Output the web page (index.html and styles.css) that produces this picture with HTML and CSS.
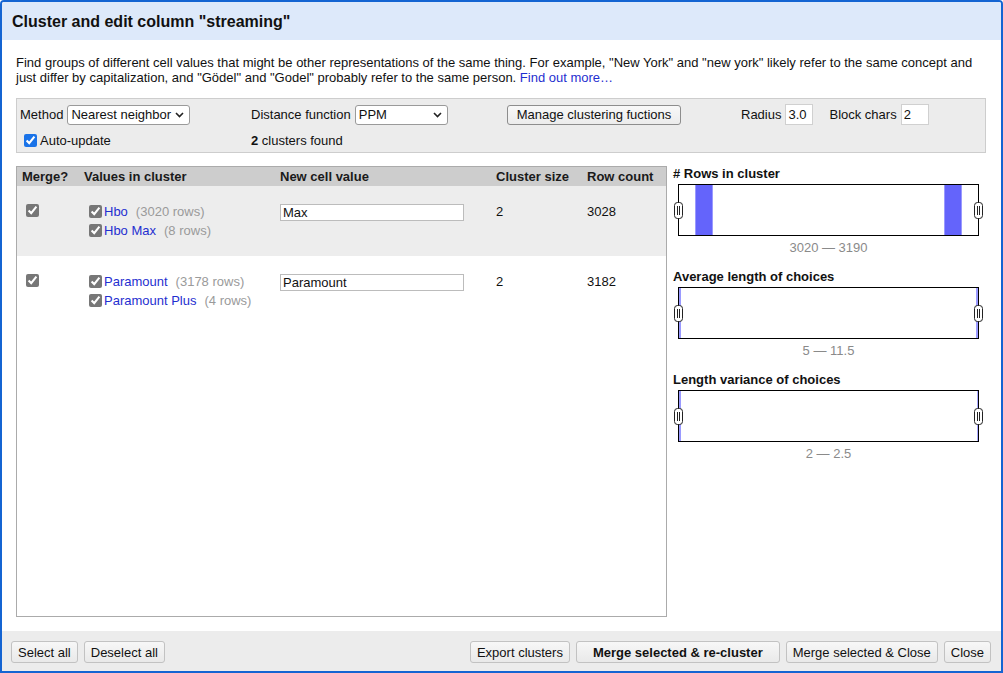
FILE: index.html
```html
<!DOCTYPE html>
<html>
<head>
<meta charset="utf-8">
<link rel="stylesheet" href="styles.css">
</head>
<body>
<div class="dialog">
  <div class="dlg-header"><h1>Cluster and edit column "streaming"</h1></div>
  <div class="dlg-body">
    <p class="intro">Find groups of different cell values that might be other representations of the same thing. For example, "New York" and "new york" likely refer to the same concept and just differ by capitalization, and "Gödel" and "Godel" probably refer to the same person. <a href="#" class="link">Find out more…</a></p>

    <div class="controls">
      <div class="ctl">
        <span>Method</span>
        <span class="sel-wrap sel-method">
          <select class="sel"><option>Nearest neighbor</option></select>
          <svg class="chev" width="9" height="6" viewBox="0 0 9 6"><path d="M1 1 L4.5 4.5 L8 1" fill="none" stroke="#222" stroke-width="1.6"/></svg>
        </span>
      </div>
      <div class="ctl">
        <span>Distance function</span>
        <span class="sel-wrap sel-dist">
          <select class="sel"><option>PPM</option></select>
          <svg class="chev" width="9" height="6" viewBox="0 0 9 6"><path d="M1 1 L4.5 4.5 L8 1" fill="none" stroke="#222" stroke-width="1.6"/></svg>
        </span>
      </div>
      <div class="ctl">
        <button class="btn btn-manage">Manage clustering fuctions</button>
      </div>
      <div class="ctl ctl-params">
        <span>Radius</span><input class="param" type="text" value="3.0">
        <span class="gap-label">Block chars</span><input class="param" type="text" value="2">
      </div>
      <div class="ctl">
        <label class="auto"><input type="checkbox" class="cb-blue" checked>Auto-update</label>
      </div>
      <div class="ctl"><span><b>2</b> clusters found</span></div>
    </div>

    <div class="main">
      <div class="table-wrap">
        <table class="clusters">
          <colgroup>
            <col class="c1"><col class="c2"><col class="c3"><col class="c4"><col>
          </colgroup>
          <thead>
            <tr><th>Merge?</th><th>Values in cluster</th><th>New cell value</th><th>Cluster size</th><th>Row count</th></tr>
          </thead>
          <tbody>
            <tr class="odd">
              <td><input type="checkbox" class="cb-grey cb-merge" checked></td>
              <td>
                <div class="val"><input type="checkbox" class="cb-grey" checked><a href="#" class="link">Hbo</a><span class="count">(3020 rows)</span></div>
                <div class="val"><input type="checkbox" class="cb-grey" checked><a href="#" class="link">Hbo Max</a><span class="count">(8 rows)</span></div>
              </td>
              <td><input type="text" class="newval" value="Max"></td>
              <td>2</td>
              <td>3028</td>
            </tr>
            <tr>
              <td><input type="checkbox" class="cb-grey cb-merge" checked></td>
              <td>
                <div class="val"><input type="checkbox" class="cb-grey" checked><a href="#" class="link">Paramount</a><span class="count">(3178 rows)</span></div>
                <div class="val"><input type="checkbox" class="cb-grey" checked><a href="#" class="link">Paramount Plus</a><span class="count">(4 rows)</span></div>
              </td>
              <td><input type="text" class="newval" value="Paramount"></td>
              <td>2</td>
              <td>3182</td>
            </tr>
          </tbody>
        </table>
      </div>

      <div class="facets">
        <div class="facet">
          <div class="facet-title"># Rows in cluster</div>
          <div class="hist">
            <div class="bar" style="left:16px;width:18px"></div>
            <div class="bar" style="left:265px;width:18px"></div>
            <svg class="handle handle-l" width="9" height="17" viewBox="0 0 9 17"><rect x="0.5" y="0.5" width="8" height="16" rx="3" fill="#fff" stroke="#222"/><line x1="3.5" y1="4" x2="3.5" y2="13" stroke="#222"/><line x1="5.5" y1="4" x2="5.5" y2="13" stroke="#222"/></svg>
            <svg class="handle handle-r" width="9" height="17" viewBox="0 0 9 17"><rect x="0.5" y="0.5" width="8" height="16" rx="3" fill="#fff" stroke="#222"/><line x1="3.5" y1="4" x2="3.5" y2="13" stroke="#222"/><line x1="5.5" y1="4" x2="5.5" y2="13" stroke="#222"/></svg>
          </div>
          <div class="range">3020 — 3190</div>
        </div>
        <div class="facet">
          <div class="facet-title">Average length of choices</div>
          <div class="hist">
            <div class="bar" style="left:0;width:2px"></div>
            <div class="bar" style="left:297px;width:2px"></div>
            <svg class="handle handle-l" width="9" height="17" viewBox="0 0 9 17"><rect x="0.5" y="0.5" width="8" height="16" rx="3" fill="#fff" stroke="#222"/><line x1="3.5" y1="4" x2="3.5" y2="13" stroke="#222"/><line x1="5.5" y1="4" x2="5.5" y2="13" stroke="#222"/></svg>
            <svg class="handle handle-r" width="9" height="17" viewBox="0 0 9 17"><rect x="0.5" y="0.5" width="8" height="16" rx="3" fill="#fff" stroke="#222"/><line x1="3.5" y1="4" x2="3.5" y2="13" stroke="#222"/><line x1="5.5" y1="4" x2="5.5" y2="13" stroke="#222"/></svg>
          </div>
          <div class="range">5 — 11.5</div>
        </div>
        <div class="facet">
          <div class="facet-title">Length variance of choices</div>
          <div class="hist">
            <div class="bar" style="left:0;width:2px"></div>
            <div class="bar bar-light" style="left:298px;width:1px"></div>
            <svg class="handle handle-l" width="9" height="17" viewBox="0 0 9 17"><rect x="0.5" y="0.5" width="8" height="16" rx="3" fill="#fff" stroke="#222"/><line x1="3.5" y1="4" x2="3.5" y2="13" stroke="#222"/><line x1="5.5" y1="4" x2="5.5" y2="13" stroke="#222"/></svg>
            <svg class="handle handle-r" width="9" height="17" viewBox="0 0 9 17"><rect x="0.5" y="0.5" width="8" height="16" rx="3" fill="#fff" stroke="#222"/><line x1="3.5" y1="4" x2="3.5" y2="13" stroke="#222"/><line x1="5.5" y1="4" x2="5.5" y2="13" stroke="#222"/></svg>
          </div>
          <div class="range">2 — 2.5</div>
        </div>
      </div>
    </div>
  </div>
  <div class="dlg-footer">
    <div class="left-btns">
      <button class="btn">Select all</button>
      <button class="btn">Deselect all</button>
    </div>
    <div class="right-btns">
      <button class="btn">Export clusters</button>
      <button class="btn btn-primary">Merge selected &amp; re-cluster</button>
      <button class="btn">Merge selected &amp; Close</button>
      <button class="btn">Close</button>
    </div>
  </div>
</div>
</body>
</html>
```

FILE: styles.css
```css
html, body {
  margin: 0;
  padding: 0;
  background: #fff;
}
body {
  font-family: "Liberation Sans", Arial, sans-serif;
  font-size: 13px;
  color: #111;
}
.dialog {
  box-sizing: border-box;
  width: 1003px;
  height: 673px;
  border: 2px solid #1464d2;
  border-radius: 4px 4px 0 0;
  display: flex;
  flex-direction: column;
  overflow: hidden;
}
.dlg-header {
  height: 38px;
  background: #dde9fa;
  display: flex;
  align-items: center;
  padding-left: 10px;
  flex: none;
}
.dlg-header h1 {
  margin: 0;
  font-size: 16px;
  font-weight: bold;
  color: #111;
  padding-top: 1px;
}
.dlg-body {
  flex: 1;
  display: flex;
  flex-direction: column;
  padding: 0 15px 14px 14px;
  min-height: 0;
}
.intro {
  margin: 15px 0 13px 0;
  line-height: 15px;
  color: #111;
}
.link {
  color: #1f2fd0;
  text-decoration: none;
}
.controls {
  box-sizing: border-box;
  height: 55px;
  background: #ececec;
  border: 1px solid #cdcdcd;
  padding: 5px 3px 3px 3px;
  display: grid;
  grid-template-columns: 231px 256px 234px auto;
  grid-template-rows: 21px 18px;
  row-gap: 6px;
  align-items: center;
}
.ctl {
  display: flex;
  align-items: center;
  white-space: nowrap;
}
.sel-wrap {
  position: relative;
  display: inline-block;
  margin-left: 4px;
  height: 20px;
}
.sel {
  -webkit-appearance: none;
  appearance: none;
  box-sizing: border-box;
  height: 20px;
  border: 1px solid #9a9a9a;
  border-radius: 3px;
  background: #fff;
  font-family: "Liberation Sans", Arial, sans-serif;
  font-size: 13px;
  color: #111;
  padding: 0 16px 0 3px;
  margin: 0;
}
.sel-method .sel { width: 123px; }
.sel-dist .sel { width: 93px; }
.chev {
  position: absolute;
  right: 6px;
  top: 7px;
  pointer-events: none;
}
.btn {
  box-sizing: border-box;
  height: 22px;
  font-family: "Liberation Sans", Arial, sans-serif;
  font-size: 13px;
  color: #111;
  background: linear-gradient(#f7f7f7, #e9e9e9);
  border: 1px solid #c2c2c2;
  border-radius: 3px;
  padding: 0 6px;
  margin: 0;
}
.btn-manage {
  height: 20px;
  width: 174px;
  border-color: #8d8d8d;
  background: linear-gradient(#f8f8f8, #ececec);
}
.param {
  box-sizing: border-box;
  width: 28px;
  height: 21px;
  border: 1px solid #d0d0d0;
  background: #fff;
  font-family: "Liberation Sans", Arial, sans-serif;
  font-size: 13px;
  color: #111;
  padding: 0 2px;
  margin: 0 0 0 4px;
  outline: none;
}
.gap-label { margin-left: 16px; }
.auto {
  display: flex;
  align-items: center;
}
.cb-blue {
  width: 13px;
  height: 13px;
  margin: 1px 3px 0 4px;
  accent-color: #1a73e8;
}
.main {
  flex: 1;
  display: flex;
  gap: 6px;
  margin-top: 13px;
  min-height: 0;
}
.table-wrap {
  box-sizing: border-box;
  width: 651px;
  flex: none;
  border: 1px solid #ababab;
  background: #fff;
}
.clusters {
  width: 100%;
  border-collapse: collapse;
  table-layout: fixed;
}
.clusters col.c1 { width: 62px; }
.clusters col.c2 { width: 196px; }
.clusters col.c3 { width: 216px; }
.clusters col.c4 { width: 91px; }
.clusters th {
  background: #cdcdcd;
  font-weight: bold;
  text-align: left;
  height: 19px;
  padding: 0 5px;
  line-height: 19px;
  color: #1a1a1a;
  white-space: nowrap;
}
.clusters td {
  padding: 16px 5px 16px 5px;
  vertical-align: top;
  line-height: 19px;
  color: #111;
}
.clusters tr.odd td {
  background: #ededed;
}
.cb-grey {
  width: 13px;
  height: 13px;
  accent-color: #777;
  margin: 0;
}
.cb-merge {
  display: block;
  margin: 2px 0 0 4px;
}
.val {
  display: flex;
  align-items: center;
  height: 19px;
  white-space: nowrap;
}
.val .cb-grey {
  margin: 0 2px 0 5px;
}
.count {
  color: #9a9a9a;
  margin-left: 8px;
}
.newval {
  display: block;
  box-sizing: border-box;
  width: 184px;
  height: 17px;
  margin-top: 2px;
  border: 1px solid #bcbcbc;
  font-family: "Liberation Sans", Arial, sans-serif;
  font-size: 13px;
  color: #111;
  padding: 0 2px;
  outline: none;
}
.facets {
  flex: 1;
  display: flex;
  flex-direction: column;
  gap: 14px;
}
.facet-title {
  font-weight: bold;
  line-height: 15px;
  color: #111;
}
.hist {
  position: relative;
  box-sizing: border-box;
  width: 301px;
  height: 52px;
  border: 1px solid #000;
  margin: 3px 0 0 5px;
  background: #fff;
}
.bar {
  position: absolute;
  top: 0;
  bottom: 0;
  background: #6464fb;
  box-shadow: inset 1px 0 0 #9a9aff, inset -1px 0 0 #9a9aff;
}
.bar-light {
  background: #a9a9ff;
  box-shadow: none;
}
.handle {
  position: absolute;
  top: 17px;
}
.handle-l { left: -5px; }
.handle-r { right: -5px; }
.range {
  width: 301px;
  margin: 4px 0 0 5px;
  text-align: center;
  color: #8a8a8a;
  line-height: 15px;
}
.dlg-footer {
  flex: none;
  height: 40px;
  box-sizing: border-box;
  background: #ececec;
  padding: 10px 10px 0 9px;
  display: flex;
  justify-content: space-between;
  align-items: flex-start;
}
.left-btns, .right-btns {
  display: flex;
  gap: 6px;
}
.btn-primary {
  font-weight: bold;
  padding: 0 16px;
}
```
